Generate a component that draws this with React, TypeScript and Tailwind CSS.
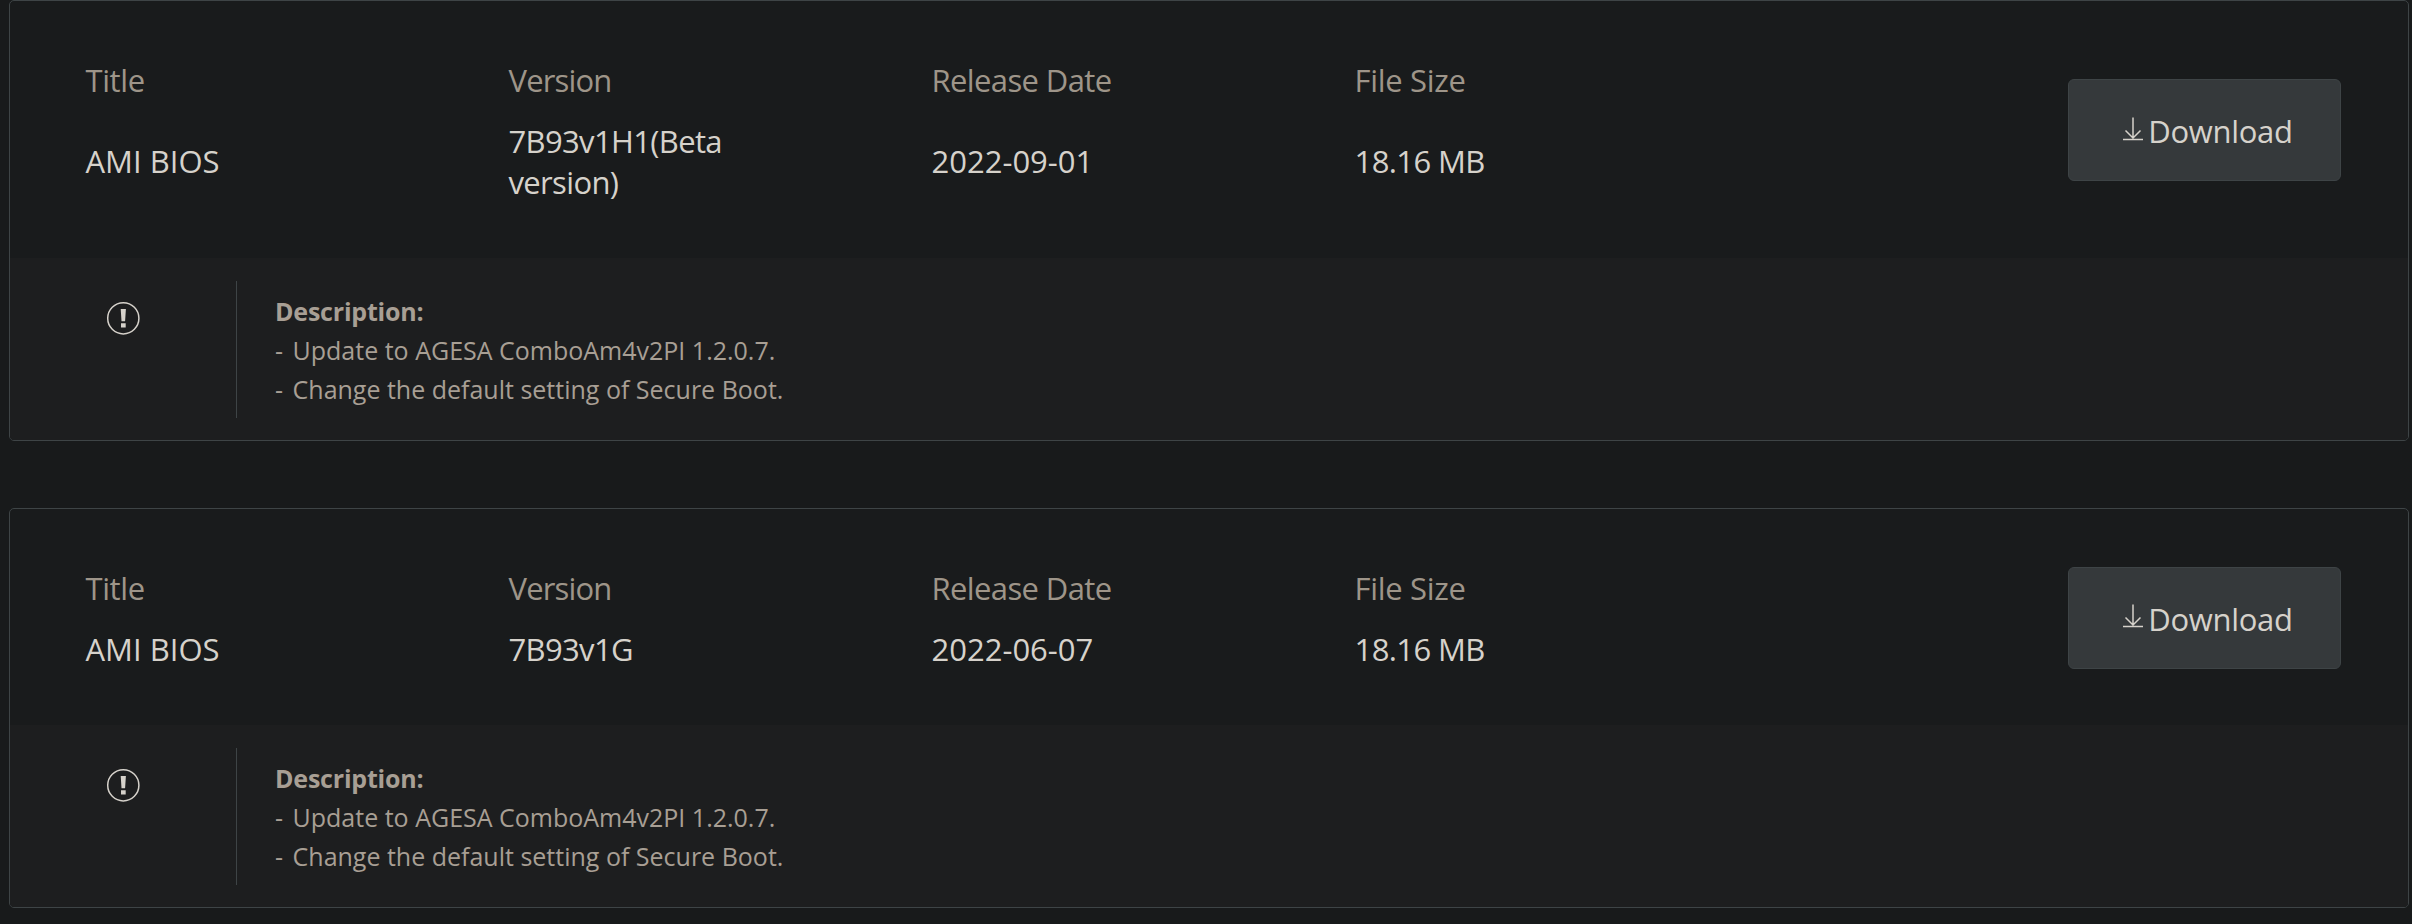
type Release = {
  version: string;
  date: string;
  size: string;
};

const releases: Release[] = [
  { version: "7B93v1H1(Beta version)", date: "2022-09-01", size: "18.16 MB" },
  { version: "7B93v1G", date: "2022-06-07", size: "18.16 MB" },
];

const notes = ["Update to AGESA ComboAm4v2PI 1.2.0.7.", "Change the default setting of Secure Boot."];

function DownloadIcon() {
  return (
    <svg width="22" height="24" viewBox="0 0 22 24" fill="none" stroke="currentColor" strokeWidth="1.5" className="mb-[3px] shrink-0">
      <path d="M11 0.5V21M3.5 13.5l7.5 7.5 7.5-7.5M1 22.5h20" />
    </svg>
  );
}

function NoticeIcon() {
  return (
    <svg width="34" height="34" viewBox="0 0 34 34" fill="none" className="shrink-0">
      <circle cx="17.3" cy="17.3" r="15.6" stroke="currentColor" strokeWidth="1.5" />
      <path d="M14.7 8h5.2l-.8 12.2h-3.6zM15 22.3h4.7v4.3H15z" fill="currentColor" />
    </svg>
  );
}

function Field({ label, value, labelClass, valueClass }: { label: string; value: string; labelClass: string; valueClass: string }) {
  return (
    <div className="flex w-[423px] flex-col self-stretch">
      <p className={`text-[#9e9589] ${labelClass}`}>{label}</p>
      <div className="mt-[19px] flex flex-1 items-center">
        <p className={`max-w-[260px] ${valueClass}`}>{value}</p>
      </div>
    </div>
  );
}

function ReleaseCard({ release }: { release: Release }) {
  return (
    <section className="overflow-hidden rounded-[5px] border border-[#3e4446] bg-[#191b1c]">
      <div className="flex items-center justify-between pt-[59px] pr-[67px] pb-[54.6px] pl-[75.5px] text-[31px] leading-[41.6px]">
        <div className="flex">
          <Field label="Title" value="AMI BIOS" labelClass="tracking-[-0.4px]" valueClass="" />
          <Field label="Version" value={release.version} labelClass="tracking-[-0.85px]" valueClass="tracking-[-0.65px]" />
          <Field label="Release Date" value={release.date} labelClass="tracking-[-0.62px]" valueClass="" />
          <Field label="File Size" value={release.size} labelClass="tracking-[-0.3px]" valueClass="tracking-[-0.6px]" />
        </div>
        <button className="-mt-[2.8px] flex h-[102px] w-[273px] items-center justify-center gap-[4px] rounded-md border border-[#3e4446] bg-[#35393b] pl-[6px]">
          <DownloadIcon />
          <span className="mt-[3px] tracking-[-0.3px]">Download</span>
        </button>
      </div>

      <div className="flex bg-[#1d1e1f] pt-[23px] pb-[22px]">
        <div className="flex h-[136.6px] w-[227px] justify-center border-r border-[#3e4446] pt-5">
          <NoticeIcon />
        </div>
        <div className="pt-[11px] pl-[38px] text-[25px] leading-[39px] text-[#a89f94]">
          <p className="font-bold tracking-[-0.2px]">Description:</p>
          {notes.map((note) => (
            <p key={note}>
              <span className="mr-[3px]">-</span> {note}
            </p>
          ))}
        </div>
      </div>
    </section>
  );
}

export default function App() {
  return (
    <main className="flex h-[924px] flex-col gap-[67.2px] overflow-hidden bg-[#181a1b] pr-[3px] pl-[9px] font-['Open_Sans','Noto_Sans',sans-serif] text-[#d6d2cb]">
      {releases.map((release) => (
        <ReleaseCard key={release.version} release={release} />
      ))}
    </main>
  );
}
